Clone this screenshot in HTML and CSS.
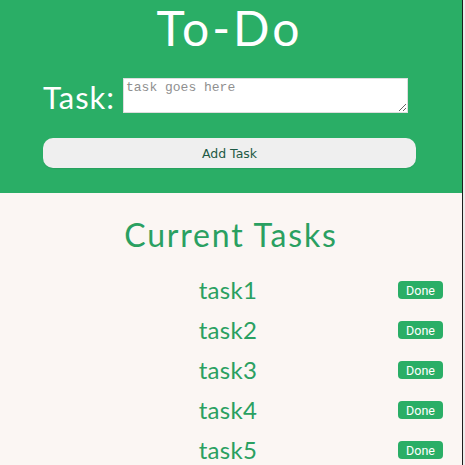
FILE: index.html
```html
<!DOCTYPE html>
<html>
<head>
<meta charset="utf-8">
<link rel="stylesheet" href="styles.css">
</head>
<body>
<div class="page">
  <header class="top">
    <h1 class="title">To-Do</h1>
    <div class="task-row">
      <label class="task-label" for="t">Task:</label>
      <textarea id="t" class="task-input" placeholder="task goes here"></textarea>
    </div>
    <button class="add-btn">Add Task</button>
  </header>
  <main class="list">
    <h2 class="list-title">Current Tasks</h2>
    <div class="item"><span class="name">task1</span><button class="done">Done</button></div>
    <div class="item"><span class="name">task2</span><button class="done">Done</button></div>
    <div class="item"><span class="name">task3</span><button class="done">Done</button></div>
    <div class="item"><span class="name">task4</span><button class="done">Done</button></div>
    <div class="item"><span class="name">task5</span><button class="done">Done</button></div>
  </main>
</div>
</body>
</html>
```
FILE: styles.css
```css
html, body {
  margin: 0;
  padding: 0;
  background: #ecebea;
  height: 465px;
  overflow: hidden;
}
.page {
  width: 462px;
  height: 465px;
  border-right: 1px solid #1e1e1e;
  background: #fbf6f3;
  font-family: Lato, "Noto Sans", sans-serif;
  overflow: hidden;
}
.top {
  background: #2aae66;
  height: 193px;
  box-sizing: border-box;
  padding: 0 46px 0 43px;
  display: flex;
  flex-direction: column;
}
.title {
  margin: 0;
  padding-top: 1px;
  text-align: center;
  color: #fff;
  font-weight: 400;
  font-size: 48px;
  line-height: 54px;
  letter-spacing: 3px;
}
.task-row {
  display: flex;
  align-items: flex-end;
  margin-top: 23px;
  margin-right: 8px;
}
.task-label {
  color: #fff;
  font-size: 31px;
  line-height: 30px;
  letter-spacing: 1px;
  width: 80px;
  margin-bottom: 1px;
}
.task-input {
  flex: 1;
  height: 35px;
  box-sizing: border-box;
  border: 1px solid #ddd;
  background: #fff;
  font-family: "Liberation Mono", "Courier New", monospace;
  font-size: 13px;
  padding: 1px 2px;
  margin: 0;
  resize: both;
}
.task-input::placeholder {
  color: #8f8f8f;
}
.add-btn {
  margin-top: 25px;
  height: 30px;
  border: none;
  border-radius: 10px;
  background: #efefef;
  color: #1d5a45;
  font-family: "DejaVu Sans", Verdana, sans-serif;
  font-size: 12.5px;
  box-shadow: 0 1px 1px rgba(0,0,0,0.08);
}
.list {
  display: flex;
  flex-direction: column;
  align-items: stretch;
}
.list-title {
  margin: 24px 0 17px;
  text-align: center;
  color: #2aa061;
  font-weight: 400;
  font-size: 32px;
  line-height: 36px;
  letter-spacing: 1.8px;
}
.item {
  position: relative;
  display: flex;
  justify-content: center;
  align-items: center;
  height: 40px;
}
.name {
  color: #2aa061;
  font-size: 24px;
  line-height: 28px;
  letter-spacing: 0.3px;
  margin-right: 6px;
}
.done {
  position: absolute;
  right: 19px;
  top: 11px;
  height: 18px;
  width: 45px;
  padding: 0;
  border: none;
  border-radius: 4px;
  background: #2aae66;
  color: #fff;
  font-family: Roboto, sans-serif;
  font-size: 12.5px;
}
```
